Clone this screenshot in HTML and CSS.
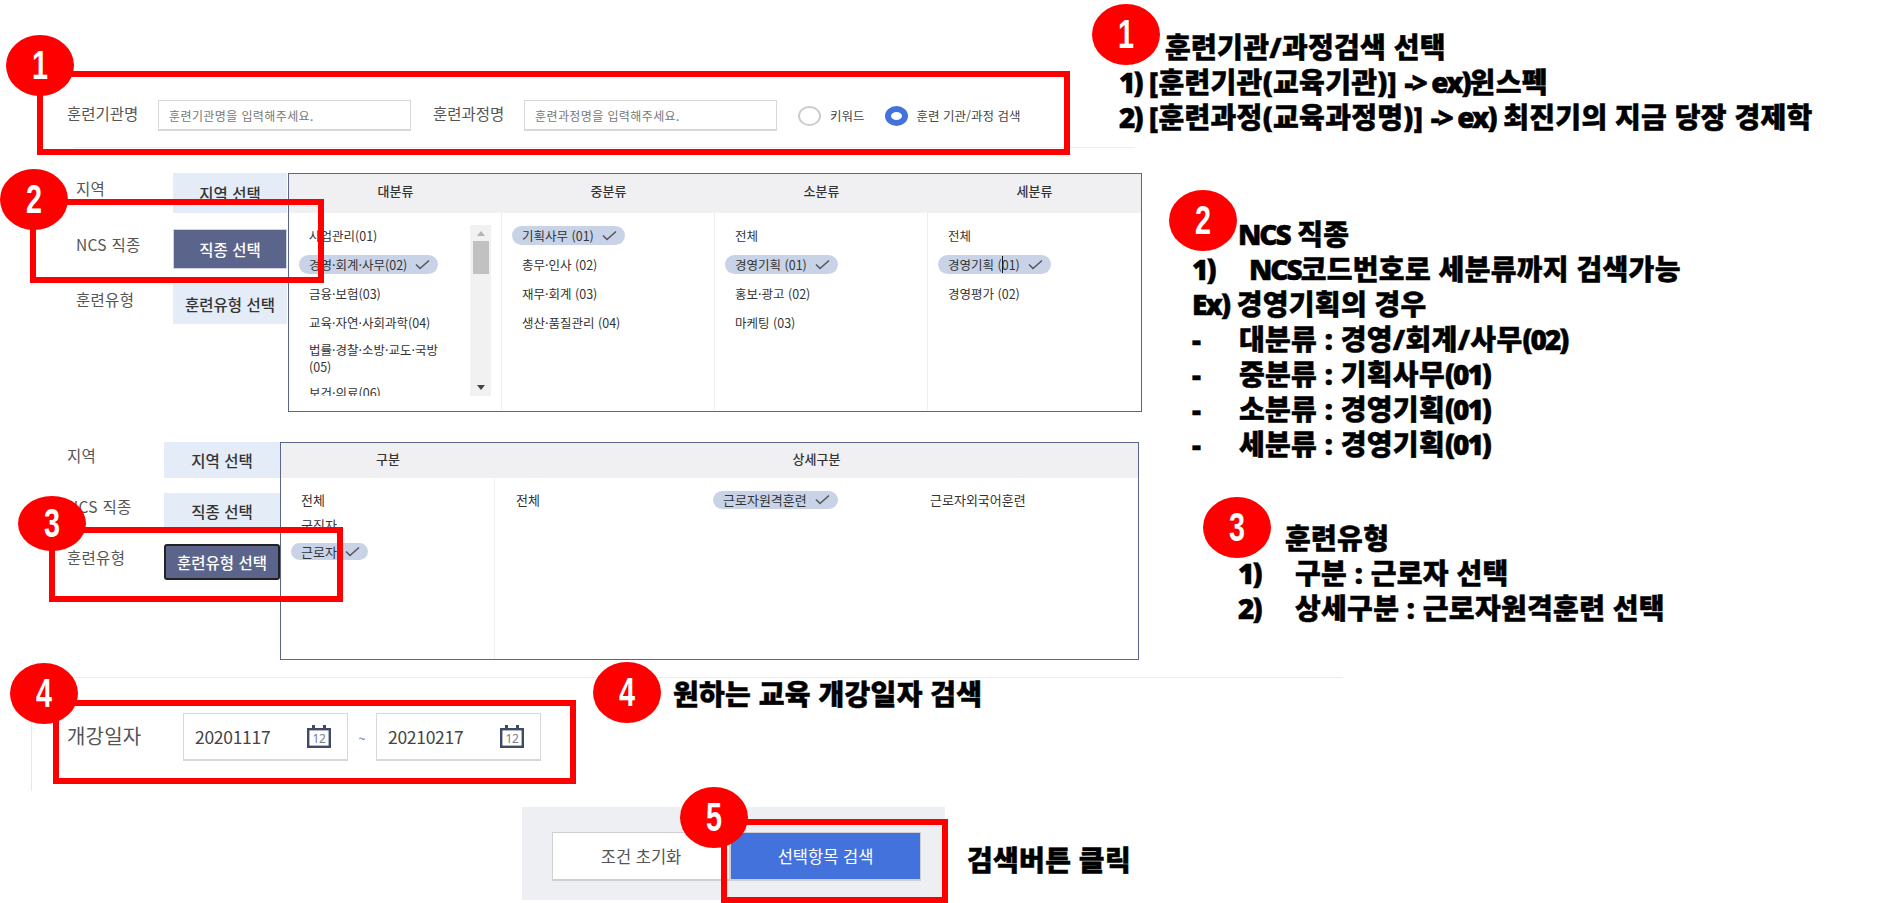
FILE: index.html
```html
<!DOCTYPE html>
<html lang="ko">
<head>
  <meta charset="UTF-8" />
  <title>훈련과정 검색 안내</title>
  <link rel="stylesheet" href="styles.css">
</head>
<body>
  <div class="canvas">

    <!-- 1: 훈련기관/과정 -->
    <div class="rule rule-top"></div>
    <div class="search-bar">
      <label class="field-label">훈련기관명</label>
      <input class="text-input" type="text" placeholder="훈련기관명을 입력해주세요." />
      <label class="field-label label-gap">훈련과정명</label>
      <input class="text-input" type="text" placeholder="훈련과정명을 입력해주세요." />
      <span class="radio radio-first"></span>
      <span class="radio-text">키워드</span>
      <span class="radio radio-on"></span>
      <span class="radio-text">훈련 기관/과정 검색</span>
    </div>

    <!-- 2: NCS 직종 -->
    <div class="filter filter-ncs">
      <div class="side">
        <span class="side-label">지역</span>
        <button class="side-btn" type="button">지역 선택</button>
        <span class="side-label">NCS 직종</span>
        <button class="side-btn side-btn-on" type="button">직종 선택</button>
        <span class="side-label">훈련유형</span>
        <button class="side-btn" type="button">훈련유형 선택</button>
      </div>
      <div class="picker picker-ncs">
        <div class="picker-head head-four">
          <span>대분류</span><span>중분류</span><span>소분류</span><span>세분류</span>
        </div>
        <div class="picker-body head-four">
          <div class="col col-scroll">
            <ul class="items items-clip">
              <li>사업관리(01)</li>
              <li><span class="pill">경영·회계·사무(02)<svg class="check" viewBox="0 0 15 11"><polyline points="1,5.5 5,9.5 14,1.5" /></svg></span></li>
              <li>금융·보험(03)</li>
              <li>교육·자연·사회과학(04)</li>
              <li class="item-wrap">법률·경찰·소방·교도·국방<br>(05)</li>
              <li>보건·의료(06)</li>
            </ul>
            <div class="scrollbar">
              <span class="arrow-up"></span>
              <span class="thumb"></span>
              <span class="arrow-down"></span>
            </div>
          </div>
          <div class="col">
            <ul class="items">
              <li><span class="pill">기획사무 (01)<svg class="check" viewBox="0 0 15 11"><polyline points="1,5.5 5,9.5 14,1.5" /></svg></span></li>
              <li>총무·인사 (02)</li>
              <li>재무·회계 (03)</li>
              <li>생산·품질관리 (04)</li>
            </ul>
          </div>
          <div class="col">
            <ul class="items">
              <li>전체</li>
              <li><span class="pill">경영기획 (01)<svg class="check" viewBox="0 0 15 11"><polyline points="1,5.5 5,9.5 14,1.5" /></svg></span></li>
              <li>홍보·광고 (02)</li>
              <li>마케팅 (03)</li>
            </ul>
          </div>
          <div class="col">
            <ul class="items">
              <li>전체</li>
              <li><span class="pill"><span>경영기획 (<i class="caret"></i>01)</span><svg class="check" viewBox="0 0 15 11"><polyline points="1,5.5 5,9.5 14,1.5" /></svg></span></li>
              <li>경영평가 (02)</li>
            </ul>
          </div>
        </div>
      </div>
    </div>

    <!-- 3: 훈련유형 -->
    <div class="filter filter-type">
      <div class="side side-type">
        <span class="side-label">지역</span>
        <button class="side-btn" type="button">지역 선택</button>
        <span class="side-label">NCS 직종</span>
        <button class="side-btn" type="button">직종 선택</button>
        <span class="side-label">훈련유형</span>
        <button class="side-btn side-btn-on side-btn-focus" type="button">훈련유형 선택</button>
      </div>
      <div class="picker picker-type">
        <div class="picker-head head-two">
          <span>구분</span><span>상세구분</span>
        </div>
        <div class="picker-body head-two">
          <div class="col">
            <ul class="items items-type">
              <li>전체</li>
              <li>구직자</li>
              <li><span class="pill">근로자<svg class="check" viewBox="0 0 15 11"><polyline points="1,5.5 5,9.5 14,1.5" /></svg></span></li>
            </ul>
          </div>
          <div class="col detail">
            <span>전체</span>
            <span><span class="pill">근로자원격훈련<svg class="check" viewBox="0 0 15 11"><polyline points="1,5.5 5,9.5 14,1.5" /></svg></span></span>
            <span>근로자외국어훈련</span>
          </div>
        </div>
      </div>
    </div>

    <!-- 4: 개강일자 -->
    <div class="rule rule-date"></div>
    <div class="rule-left"></div>
    <div class="date-row">
      <span class="date-label">개강일자</span>
      <div class="date-field">
        <span>20201117</span>
        <svg class="cal" viewBox="0 0 24 23">
          <rect x="5" y="0" width="3" height="6" fill="#3f4a66" />
          <rect x="16" y="0" width="3" height="6" fill="#3f4a66" />
          <rect x="1.2" y="4.2" width="21.6" height="17.6" fill="#fff" stroke="#3f4a66" stroke-width="2.4" />
          <text x="12" y="18" text-anchor="middle">12</text>
        </svg>
      </div>
      <span class="date-sep">~</span>
      <div class="date-field">
        <span>20210217</span>
        <svg class="cal" viewBox="0 0 24 23">
          <rect x="5" y="0" width="3" height="6" fill="#3f4a66" />
          <rect x="16" y="0" width="3" height="6" fill="#3f4a66" />
          <rect x="1.2" y="4.2" width="21.6" height="17.6" fill="#fff" stroke="#3f4a66" stroke-width="2.4" />
          <text x="12" y="18" text-anchor="middle">12</text>
        </svg>
      </div>
    </div>

    <!-- 5: 버튼 -->
    <div class="actions">
      <button class="btn btn-reset" type="button">조건 초기화</button>
      <button class="btn btn-search" type="button">선택항목 검색</button>
    </div>

    <!-- 빨간 표시 -->
    <div class="mark mark-1"></div>
    <div class="mark mark-2"></div>
    <div class="mark mark-3"></div>
    <div class="mark mark-4"></div>
    <div class="mark mark-5"></div>

    <span class="badge badge-a"><b>1</b></span>
    <span class="badge badge-b"><b>2</b></span>
    <span class="badge badge-c"><b>3</b></span>
    <span class="badge badge-d"><b>4</b></span>
    <span class="badge badge-e"><b>5</b></span>
    <span class="badge badge-f"><b>1</b></span>
    <span class="badge badge-g"><b>2</b></span>
    <span class="badge badge-h"><b>3</b></span>
    <span class="badge badge-i"><b>4</b></span>

    <!-- 설명 -->
    <div class="note note-1">
      <div class="note-title">훈련기관/과정검색 선택</div>
      <div><span class="latin">1)</span> [훈련기관(교육기관)] <span class="latin">-&gt; ex)</span>윈스펙</div>
      <div><span class="latin">2)</span> [훈련과정(교육과정명)] <span class="latin">-&gt; ex)</span> 최진기의 지금 당장 경제학</div>
    </div>

    <div class="note note-2">
      <div class="note-title"><span class="latin">NCS</span> 직종</div>
      <div class="note-row row-num"><span class="latin">1)</span><span><span class="latin">NCS</span>코드번호로 세분류까지 검색가능</span></div>
      <div><span class="latin">Ex)</span> 경영기획의 경우</div>
      <div class="note-row row-dash"><span>-</span><span>대분류 : 경영/회계/사무<span class="latin">(02)</span></span></div>
      <div class="note-row row-dash"><span>-</span><span>중분류 : 기획사무<span class="latin">(01)</span></span></div>
      <div class="note-row row-dash"><span>-</span><span>소분류 : 경영기획<span class="latin">(01)</span></span></div>
      <div class="note-row row-dash"><span>-</span><span>세분류 : 경영기획<span class="latin">(01)</span></span></div>
    </div>

    <div class="note note-3">
      <div class="note-title">훈련유형</div>
      <div class="note-row row-num"><span class="latin">1)</span><span>구분 : 근로자 선택</span></div>
      <div class="note-row row-num"><span class="latin">2)</span><span>상세구분 : 근로자원격훈련 선택</span></div>
    </div>

    <div class="note note-4">원하는 교육 개강일자 검색</div>
    <div class="note note-5">검색버튼 클릭</div>
  </div>
</body>
</html>
```

FILE: styles.css
```css
* {
  box-sizing: border-box;
}

body {
  margin: 0;
  background: #fff;
  font-family: "Noto Sans CJK KR", "Noto Sans", sans-serif;
  color: #333;
}

ul {
  list-style: none;
  margin: 0;
  padding: 0;
}

.canvas {
  position: relative;
  width: 1899px;
  height: 903px;
  overflow: hidden;
}

/* light divider lines */
.rule {
  position: absolute;
  height: 1px;
  background: #eee;
}

.rule-top {
  left: 74px;
  top: 147px;
  width: 1061px;
}

.rule-date {
  left: 73px;
  top: 677px;
  width: 1270px;
}

.rule-left {
  position: absolute;
  left: 31px;
  top: 677px;
  width: 1px;
  height: 114px;
  background: #e8e8e8;
}

/* 1. search bar */
.search-bar {
  position: absolute;
  left: 67px;
  top: 100px;
  height: 31px;
  display: flex;
  align-items: center;
}

.field-label {
  width: 91px;
  padding-bottom: 5px;
  font-size: 15.5px;
  color: #555;
}

.label-gap {
  margin-left: 22px;
}

.text-input {
  width: 253px;
  height: 31px;
  padding: 0 10px;
  border: 1px solid #d8d8d8;
  border-bottom-width: 2px;
  font-family: inherit;
  font-size: 12px;
  letter-spacing: 0.4px;
  background: #fff;
}

.text-input::placeholder {
  color: #777;
  opacity: 1;
}

.radio {
  width: 23px;
  height: 20px;
  margin-right: 9px;
  border: 2.5px solid #ccc;
  border-radius: 50%;
  background: #fff;
}

.radio-first {
  margin-left: 21px;
}

.radio-on {
  border: 6px solid #4472dc;
  margin-left: 20px;
}

.radio-text {
  font-size: 12.5px;
  color: #444;
}

/* 2, 3. filter blocks */
.filter {
  position: absolute;
  display: flex;
}

.filter-ncs {
  left: 76px;
  top: 173px;
}

.filter-type {
  left: 67px;
  top: 442px;
}

.side {
  display: grid;
  grid-template-columns: 97px 114px;
  grid-auto-rows: 40px;
  row-gap: 15.5px;
  margin-right: 1px;
}

.side-type {
  grid-template-columns: 97px 116px;
  grid-auto-rows: 36px;
  row-gap: 15px;
  margin-right: 0;
}

.side-label {
  padding-top: 4px;
  font-size: 15.5px;
  letter-spacing: 0.3px;
  color: #555;
}

.side-type .side-label {
  padding-top: 2px;
}

.side-btn {
  border: 0;
  padding: 0;
  font-family: inherit;
  font-size: 15.5px;
  font-weight: 500;
  color: #333;
  background: #e4ecf7;
}

.side-btn-on {
  color: #fff;
  background: #5b648a;
  border: 1px solid #cfd4e2;
}

.side-btn-focus {
  border: 2px solid #222;
  border-radius: 3px;
}

.picker {
  border: 1.5px solid #5b648a;
  background: #fff;
}

.picker-ncs {
  width: 854px;
  height: 239px;
}

.picker-type {
  width: 859px;
  height: 218px;
}

.picker-head {
  display: grid;
  background: #f0f0f3;
  font-size: 13px;
  font-weight: 500;
  text-align: center;
}

.picker-ncs .picker-head {
  height: 39px;
  line-height: 34px;
}

.picker-type .picker-head {
  height: 35px;
  line-height: 32px;
}

.head-four {
  display: grid;
  grid-template-columns: repeat(4, 213px);
}

.head-two {
  display: grid;
  grid-template-columns: 214px 1fr;
}

.picker-body {
  font-size: 12.5px;
}

.picker-ncs .picker-body {
  height: 197px;
}

.picker-type .picker-body {
  height: 181px;
  font-size: 13px;
}

.col {
  border-right: 1px solid #eee;
}

.col:last-child {
  border-right: 0;
}

.col-scroll {
  display: flex;
}

.items {
  padding: 14px 0 0 20px;
  line-height: 17px;
}

.items li {
  height: 17px;
  margin-bottom: 12px;
  white-space: nowrap;
}

.items li.item-wrap {
  height: auto;
  margin: -2px 0 9px;
}

.items-clip {
  flex: 1;
  height: 183px;
  overflow: hidden;
}

.items-type {
  padding: 13px 0 0 20px;
}

.items-type li {
  margin-bottom: 8px;
}

.items-type li:last-child {
  margin-top: 10px;
}

.pill {
  display: inline-flex;
  align-items: center;
  height: 19px;
  margin: -1px 0 0 -10px;
  padding: 0 8px 0 10px;
  border-radius: 10px;
  background: #c8d3e8;
}

.picker-type .pill {
  height: 17.5px;
}

.check {
  width: 15px;
  height: 11px;
  margin-left: 8px;
}

.check polyline {
  fill: none;
  stroke: #555;
  stroke-width: 1.5;
}

.caret {
  display: inline-block;
  width: 1px;
  height: 17px;
  margin-right: -1px;
  vertical-align: -3px;
  background: #111;
}

.scrollbar {
  display: flex;
  flex-direction: column;
  align-items: center;
  width: 21px;
  height: 171px;
  margin: 12px 10px 0 0;
  background: #f1f1f1;
}

.arrow-up {
  margin-top: 6px;
  border: 4px solid transparent;
  border-top: 0;
  border-bottom: 5px solid #b5b5b5;
}

.thumb {
  width: 16px;
  height: 33px;
  margin-top: 5px;
  background: #c1c1c1;
}

.arrow-down {
  margin-top: auto;
  margin-bottom: 6px;
  border: 4px solid transparent;
  border-bottom: 0;
  border-top: 5px solid #444;
}

.detail {
  display: grid;
  grid-template-columns: repeat(3, 207px);
  align-items: start;
  padding: 13px 0 0 21px;
  line-height: 17.5px;
}

/* 4. date row */
.date-row {
  position: absolute;
  left: 67px;
  top: 713px;
  display: flex;
  align-items: center;
  height: 48px;
}

.date-label {
  width: 116px;
  padding-bottom: 3px;
  font-size: 20px;
  letter-spacing: 0.2px;
  color: #555;
}

.date-field {
  display: flex;
  align-items: center;
  justify-content: space-between;
  width: 165px;
  height: 48px;
  padding: 0 16px 0 11px;
  border: 1px solid #d8d8d8;
  border-bottom-width: 2px;
  font-size: 17.5px;
  letter-spacing: -0.3px;
  color: #444;
}

.date-sep {
  width: 28px;
  font-size: 12px;
  text-align: center;
  color: #666;
}

.cal {
  width: 24px;
  height: 23px;
}

.cal text {
  font-family: "Noto Sans", sans-serif;
  font-size: 12px;
  fill: #77808f;
}

/* 5. buttons */
.actions {
  position: absolute;
  left: 522px;
  top: 807px;
  width: 423px;
  height: 93px;
  display: flex;
  padding: 25px 0 0 30px;
  background: #eeeff2;
}

.btn {
  height: 49px;
  font-family: inherit;
  font-size: 16.5px;
  border: 1px solid #cfcfd6;
  border-bottom-width: 2px;
}

.btn-reset {
  width: 178px;
  background: #fff;
  color: #555;
}

.btn-search {
  width: 191px;
  background: #4472dc;
  color: #fff;
}

/* red highlight boxes */
.mark {
  position: absolute;
  border: 6px solid #f00;
}

.mark-1 {
  left: 37px;
  top: 71px;
  width: 1033px;
  height: 84px;
}

.mark-2 {
  left: 30px;
  top: 199px;
  width: 294px;
  height: 84px;
}

.mark-3 {
  left: 49px;
  top: 527px;
  width: 294px;
  height: 75px;
}

.mark-4 {
  left: 53px;
  top: 700px;
  width: 523px;
  height: 84px;
}

.mark-5 {
  left: 721px;
  top: 819px;
  width: 227px;
  height: 84px;
}

/* number circles */
.badge {
  position: absolute;
  display: flex;
  align-items: center;
  justify-content: center;
  width: 68px;
  height: 61px;
  border-radius: 50%;
  background: #f00;
  color: #fff;
  font-family: "Liberation Sans", sans-serif;
  font-size: 40px;
}

.badge b {
  display: block;
  transform: scaleX(0.72);
}

.badge-a { left: 6px; top: 35px; }
.badge-b { left: 0; top: 169px; }
.badge-c { left: 18px; top: 496px; height: 55px; }
.badge-d { left: 10px; top: 663px; }
.badge-e { left: 680px; top: 787px; }
.badge-f { left: 1092px; top: 4px; }
.badge-g { left: 1169px; top: 190px; }
.badge-h { left: 1203px; top: 497px; }
.badge-i { left: 593px; top: 662px; }

/* black notes */
.note {
  position: absolute;
  font-family: "Noto Sans", "Noto Sans CJK KR", sans-serif;
  font-size: 28px;
  font-stretch: 62.5%;
  font-weight: 900;
  letter-spacing: 0.3px;
  line-height: 35px;
  color: #000;
  white-space: nowrap;
  -webkit-text-stroke: 0.5px #000;
}

.latin {
  letter-spacing: -2px;
}

.note-1 {
  left: 1119px;
  top: 30px;
}

.note-1 .note-title {
  padding-left: 46px;
}

.note-2 {
  left: 1192px;
  top: 217px;
}

.note-2 .note-title {
  padding-left: 46px;
}

.note-3 {
  left: 1238px;
  top: 521px;
}

.note-3 .note-title {
  padding-left: 47px;
}

.note-row {
  display: grid;
}

.row-num {
  grid-template-columns: 57px auto;
}

.row-dash {
  grid-template-columns: 47px auto;
}

.note-4 {
  left: 673px;
  top: 677px;
}

.note-5 {
  left: 967px;
  top: 843px;
}
```
